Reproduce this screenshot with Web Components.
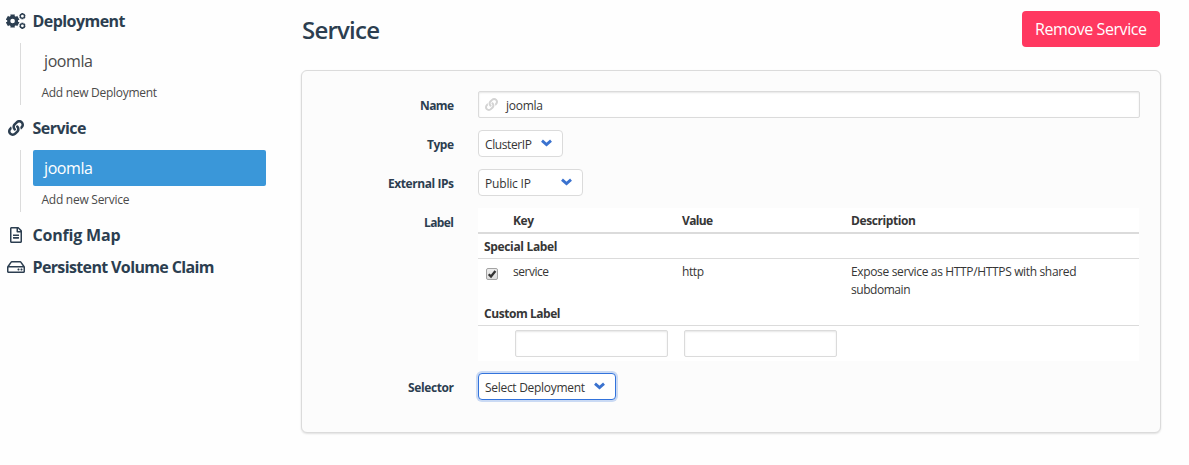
<!DOCTYPE html>
<html lang="en">
<head>
<meta charset="utf-8">
<title>Service</title>
<style>
body{margin:0;background:#fefefe;font-family:"Open Sans","Noto Sans",sans-serif;font-size:12px;line-height:18px;color:#363636;--drop:0px}
</style>
</head>
<body>
<kube-app></kube-app>
<script>
const gear=(cx,cy,r,teeth,w,hole)=>{
  let d='';
  for(let i=0;i<teeth;i++){
    const a=i*2*Math.PI/teeth+Math.PI/2;
    const p=(rr,da)=>(cx+rr*Math.cos(a+da)).toFixed(2)+' '+(cy+rr*Math.sin(a+da)).toFixed(2);
    d+=(i?'L':'M')+p(r*.78,-w*1.15)+'L'+p(r,-w)+'L'+p(r,w)+'L'+p(r*.78,w*1.15);
  }
  return d+`ZM${cx-hole} ${cy}a${hole} ${hole} 0 1 0 ${2*hole} 0a${hole} ${hole} 0 1 0 ${-2*hole} 0Z`;
};
const ICONS={
 cogs:['0 0 20 16',gear(6.6,8,7,6,.33,2.3)+gear(16.4,3.2,3.3,6,.36,1.4)+gear(16.4,12.8,3.3,6,.36,1.4)],
 link:['0 0 512 512','M326.612 185.391c59.747 59.809 58.927 155.698.36 214.59-.11.12-.24.25-.36.37l-67.2 67.2c-59.27 59.27-155.699 59.262-214.96 0-59.27-59.26-59.27-155.7 0-214.96l37.106-37.106c9.84-9.84 26.786-3.3 27.294 10.606.648 17.722 3.826 35.527 9.69 52.721 1.986 5.822.567 12.262-3.783 16.612l-13.087 13.087c-28.026 28.026-28.905 73.66-1.155 101.96 28.024 28.579 74.086 28.749 102.325.51l67.2-67.19c28.191-28.191 28.073-73.757 0-101.83-3.701-3.694-7.429-6.564-10.341-8.569a16.037 16.037 0 0 1-6.947-12.606c-.396-10.567 3.348-21.456 11.698-29.806l21.054-21.055c5.521-5.521 14.182-6.199 20.584-1.731a152.482 152.482 0 0 1 20.522 17.197zM467.547 44.449c-59.261-59.262-155.69-59.27-214.96 0l-67.2 67.2c-.12.12-.25.25-.36.37-58.566 58.892-59.387 154.781.36 214.59a152.454 152.454 0 0 0 20.521 17.196c6.402 4.468 15.064 3.789 20.584-1.731l21.054-21.055c8.35-8.35 12.094-19.239 11.698-29.806a16.037 16.037 0 0 0-6.947-12.606c-2.912-2.005-6.64-4.875-10.341-8.569-28.073-28.073-28.191-73.639 0-101.83l67.2-67.19c28.239-28.239 74.3-28.069 102.325.51 27.75 28.3 26.872 73.934-1.155 101.96l-13.087 13.087c-4.35 4.35-5.769 10.79-3.783 16.612 5.864 17.194 9.042 34.999 9.69 52.721.509 13.906 17.454 20.446 27.294 10.606l37.106-37.106c59.271-59.259 59.271-155.699.001-214.959z'],
 file:['0 0 384 512','M288 248v28c0 6.6-5.4 12-12 12H108c-6.6 0-12-5.4-12-12v-28c0-6.6 5.4-12 12-12h168c6.6 0 12 5.4 12 12zm-12 72H108c-6.6 0-12 5.4-12 12v28c0 6.6 5.4 12 12 12h168c6.6 0 12-5.4 12-12v-28c0-6.6-5.4-12-12-12zm108-188.1V464c0 26.5-21.5 48-48 48H48c-26.5 0-48-21.5-48-48V48C0 21.5 21.5 0 48 0h204.1C264.8 0 277 5.1 286 14.1L369.9 98c9 8.9 14.1 21.2 14.1 33.9zm-128-80V128h76.1L256 51.9zM336 464V176H232c-13.3 0-24-10.7-24-24V48H48v416h288z'],
 hdd:['0 0 576 512','M567.403 235.642L462.323 84.589A48 48 0 0 0 422.919 64H153.081a48 48 0 0 0-39.404 20.589L8.597 235.642A48.001 48.001 0 0 0 0 263.054V400c0 26.51 21.49 48 48 48h480c26.51 0 48-21.49 48-48V263.054c0-9.801-3-19.366-8.597-27.412zM153.081 112h269.838l77.913 112H75.168l77.913-112zM528 400H48V272h480v128zm-32-64c0 17.673-14.327 32-32 32s-32-14.327-32-32 14.327-32 32-32 32 14.327 32 32zm-96 0c0 17.673-14.327 32-32 32s-32-14.327-32-32 14.327-32 32-32 32 14.327 32 32z']
};
const define=(name,render,after)=>customElements.define(name,class extends HTMLElement{
  connectedCallback(){
    if(this.shadowRoot)return;
    this.attachShadow({mode:'open'}).innerHTML=render(this);
    if(after)after(this);
  }
});
const at=(e,n,d='')=>e.getAttribute(n)??d;

define('ui-icon',e=>{const[v,d]=ICONS[at(e,'name')];return `<style>:host{display:inline-flex;flex:none}svg{display:block;fill:currentColor;fill-rule:evenodd}</style><svg viewBox="${v}" width="${at(e,'w')}" height="${at(e,'h')}"><path d="${d}"/></svg>`});

/* Text set to a fixed measure: tracking is adjusted so the run is exactly w pixels long. */
define('ui-text',e=>`<style>:host{display:inline-block;white-space:nowrap;padding-top:var(--drop);margin-bottom:calc(-1 * var(--drop))}</style><span>${at(e,'text')}</span>`,e=>{
  const s=e.shadowRoot.querySelector('span'),w=+at(e,'w');
  const n=at(e,'text').length,t=(w-s.getBoundingClientRect().width)/(n-1);
  s.style.letterSpacing=t+'px';
  s.style.marginRight=-t+'px';
});

define('menu-heading',e=>`<style>:host{display:flex;align-items:center;height:32px;font-size:16px;font-weight:700;color:#2c3e50}
.i{width:20px;margin:0 7px 0 5.5px;display:flex;justify-content:center}</style><span class="i"><ui-icon name="${at(e,'icon')}" w="${at(e,'iw')}" h="${at(e,'ih')}"></ui-icon></span><ui-text text="${at(e,'text')}" w="${at(e,'w')}"></ui-text>`);

define('menu-list',()=>`<style>:host{display:block;margin:6px 0 7px 20px;padding-left:12px;border-left:1px solid #dbdbdb;height:62px;box-sizing:border-box;width:246px}</style><slot></slot>`);

define('menu-item',e=>`<style>:host{display:flex;align-items:center;height:36px;padding-left:11px;border-radius:2px;font-size:16px;color:#4a4a4a}
:host([active]){background:#3a97d9;color:#fff}
:host([small]){--drop:1px;height:26px;font-size:12px;padding-left:8.5px}</style><ui-text text="${at(e,'text')}" w="${at(e,'w')}"></ui-text>`);

define('side-menu',()=>`<style>:host{display:block;width:266px;flex:none;padding-top:5px}</style>
<menu-heading icon="cogs" iw="20" ih="16" text="Deployment" w="93"></menu-heading>
<menu-list><menu-item text="joomla" w="49"></menu-item><menu-item small text="Add new Deployment" w="115.5"></menu-item></menu-list>
<menu-heading icon="link" iw="16" ih="16" text="Service" w="54"></menu-heading>
<menu-list><menu-item active text="joomla" w="49"></menu-item><menu-item small text="Add new Service" w="88"></menu-item></menu-list>
<menu-heading icon="file" iw="12" ih="16" text="Config Map" w="88"></menu-heading>
<menu-heading icon="hdd" iw="18" ih="16" text="Persistent Volume Claim" w="182"></menu-heading>`);

define('ui-button',e=>`<style>:host{display:flex;align-items:center;justify-content:center;width:138px;height:36px;border-radius:4px;background:#ff3860;color:#fff;font-size:16px}</style><ui-text text="${at(e,'text')}" w="${at(e,'w')}"></ui-text>`);

define('ui-input',()=>`<style>:host{--drop:1px;display:flex;align-items:center;height:27px;box-sizing:border-box;border:1px solid #dbdbdb;border-radius:2px;background:#fff;box-shadow:inset 0 1px 2px rgba(10,10,10,.1);padding:1px 6px 0}</style><slot></slot>`);

define('ui-select',e=>`<style>:host{--drop:1px;display:flex;align-items:center;justify-content:space-between;height:27px;box-sizing:border-box;border:1px solid #dbdbdb;border-radius:4px;background:#fff;padding:1px 10px 0 6px;width:${at(e,'width')}px}
:host([focused]){border-color:#3273dc;box-shadow:0 0 0 2px rgba(50,115,220,.25)}svg{display:block;margin-top:-2px}</style><ui-text text="${at(e,'text')}" w="${at(e,'w')}"></ui-text><svg width="11" height="8" viewBox="0 0 11 8" fill="none" stroke="#3a72cf" stroke-width="2.8"><path d="M1 1.6L5.5 5.6L10 1.6"/></svg>`);

define('form-row',e=>`<style>:host{display:grid;grid-template-columns:152px 1fr;column-gap:24px}
.l{justify-self:end;font-weight:700;color:#2c3e50;padding-top:6px}.l,.b{display:flex}.b ::slotted(ui-input){flex:1}</style><div class="l"><ui-text text="${at(e,'label')}" w="${at(e,'w')}"></ui-text></div><div class="b"><slot></slot></div>`);

define('ui-checkbox',()=>`<style>:host{display:block}svg{display:block}</style><svg width="12" height="12" viewBox="0 0 12 12"><defs><linearGradient id="g" x2="0" y2="1"><stop stop-color="#eee"/><stop offset="1" stop-color="#dcdcdc"/></linearGradient></defs><rect x=".5" y=".5" width="11" height="11" rx="1.5" fill="url(#g)" stroke="#a3a3a3"/><path d="M2.7 6.2L5 8.5L9.4 3" fill="none" stroke="#333" stroke-width="2.3"/></svg>`);

define('label-table',()=>`<style>:host{display:block;width:661px;height:153px;background:#fff;color:#363636}
.r{display:grid;grid-template-columns:35px 169px 169px 1fr;box-sizing:border-box}
.head{height:26px;padding-top:4px;border-bottom:2px solid #dbdbdb;font-weight:700}
.sec{height:25px;padding:4px 0 0 6px;border-bottom:1px solid #dbdbdb;font-weight:700;box-sizing:border-box;display:flex;align-items:flex-start}
.row{height:42px;padding-top:4px}.row ui-checkbox{padding:5px 0 0 8px}
.d{display:flex;flex-direction:column;align-items:flex-start}
.in{padding-top:4px}.in ui-input{width:153px;margin-left:2px}</style>
<div class="r head"><span></span><ui-text text="Key" w="21"></ui-text><ui-text text="Value" w="31"></ui-text><ui-text text="Description" w="65"></ui-text></div>
<div class="sec"><ui-text text="Special Label" w="73.5"></ui-text></div>
<div class="r row"><ui-checkbox></ui-checkbox><ui-text text="service" w="36"></ui-text><ui-text text="http" w="22"></ui-text><div class="d"><ui-text text="Expose service as HTTP/HTTPS with shared" w="225.5"></ui-text><ui-text text="subdomain" w="59.5"></ui-text></div></div>
<div class="sec"><ui-text text="Custom Label" w="76.5"></ui-text></div>
<div class="r in"><span></span><ui-input></ui-input><ui-input></ui-input></div>`);

define('service-card',()=>`<style>:host{display:flex;flex-direction:column;gap:12px;width:860px;height:363px;box-sizing:border-box;margin-top:23px;padding:20px 20px 0 0;border:1px solid #dbdbdb;border-radius:6px;background:#fcfcfc;box-shadow:0 1px 2px rgba(0,0,0,.12)}
ui-icon{color:#d3d3d3;margin:-2px 8px 0 0}ui-input{--drop:1px}</style>
<form-row label="Name" w="34"><ui-input><ui-icon name="link" w="13" h="13"></ui-icon><ui-text text="joomla" w="37"></ui-text></ui-input></form-row>
<form-row label="Type" w="27"><ui-select width="85" text="ClusterIP" w="47"></ui-select></form-row>
<form-row label="External IPs" w="66"><ui-select width="105" text="Public IP" w="46"></ui-select></form-row>
<form-row label="Label" w="30"><label-table></label-table></form-row>
<form-row label="Selector" w="46"><ui-select focused width="138" text="Select Deployment" w="100"></ui-select></form-row>`);

define('kube-app',()=>`<style>:host{display:flex;height:465px;overflow:hidden}
main{margin-left:35px;width:860px}
header{display:flex;justify-content:space-between;align-items:center;padding-top:11px;width:859px;height:36px}
h1{margin:2px 0 0 1px;font-size:24px;line-height:36px;font-weight:600;color:#2c3e50}</style>
<side-menu></side-menu><main><header><h1><ui-text text="Service" w="78"></ui-text></h1><ui-button text="Remove Service" w="112"></ui-button></header><service-card></service-card></main>`);
</script>
</body>
</html>
